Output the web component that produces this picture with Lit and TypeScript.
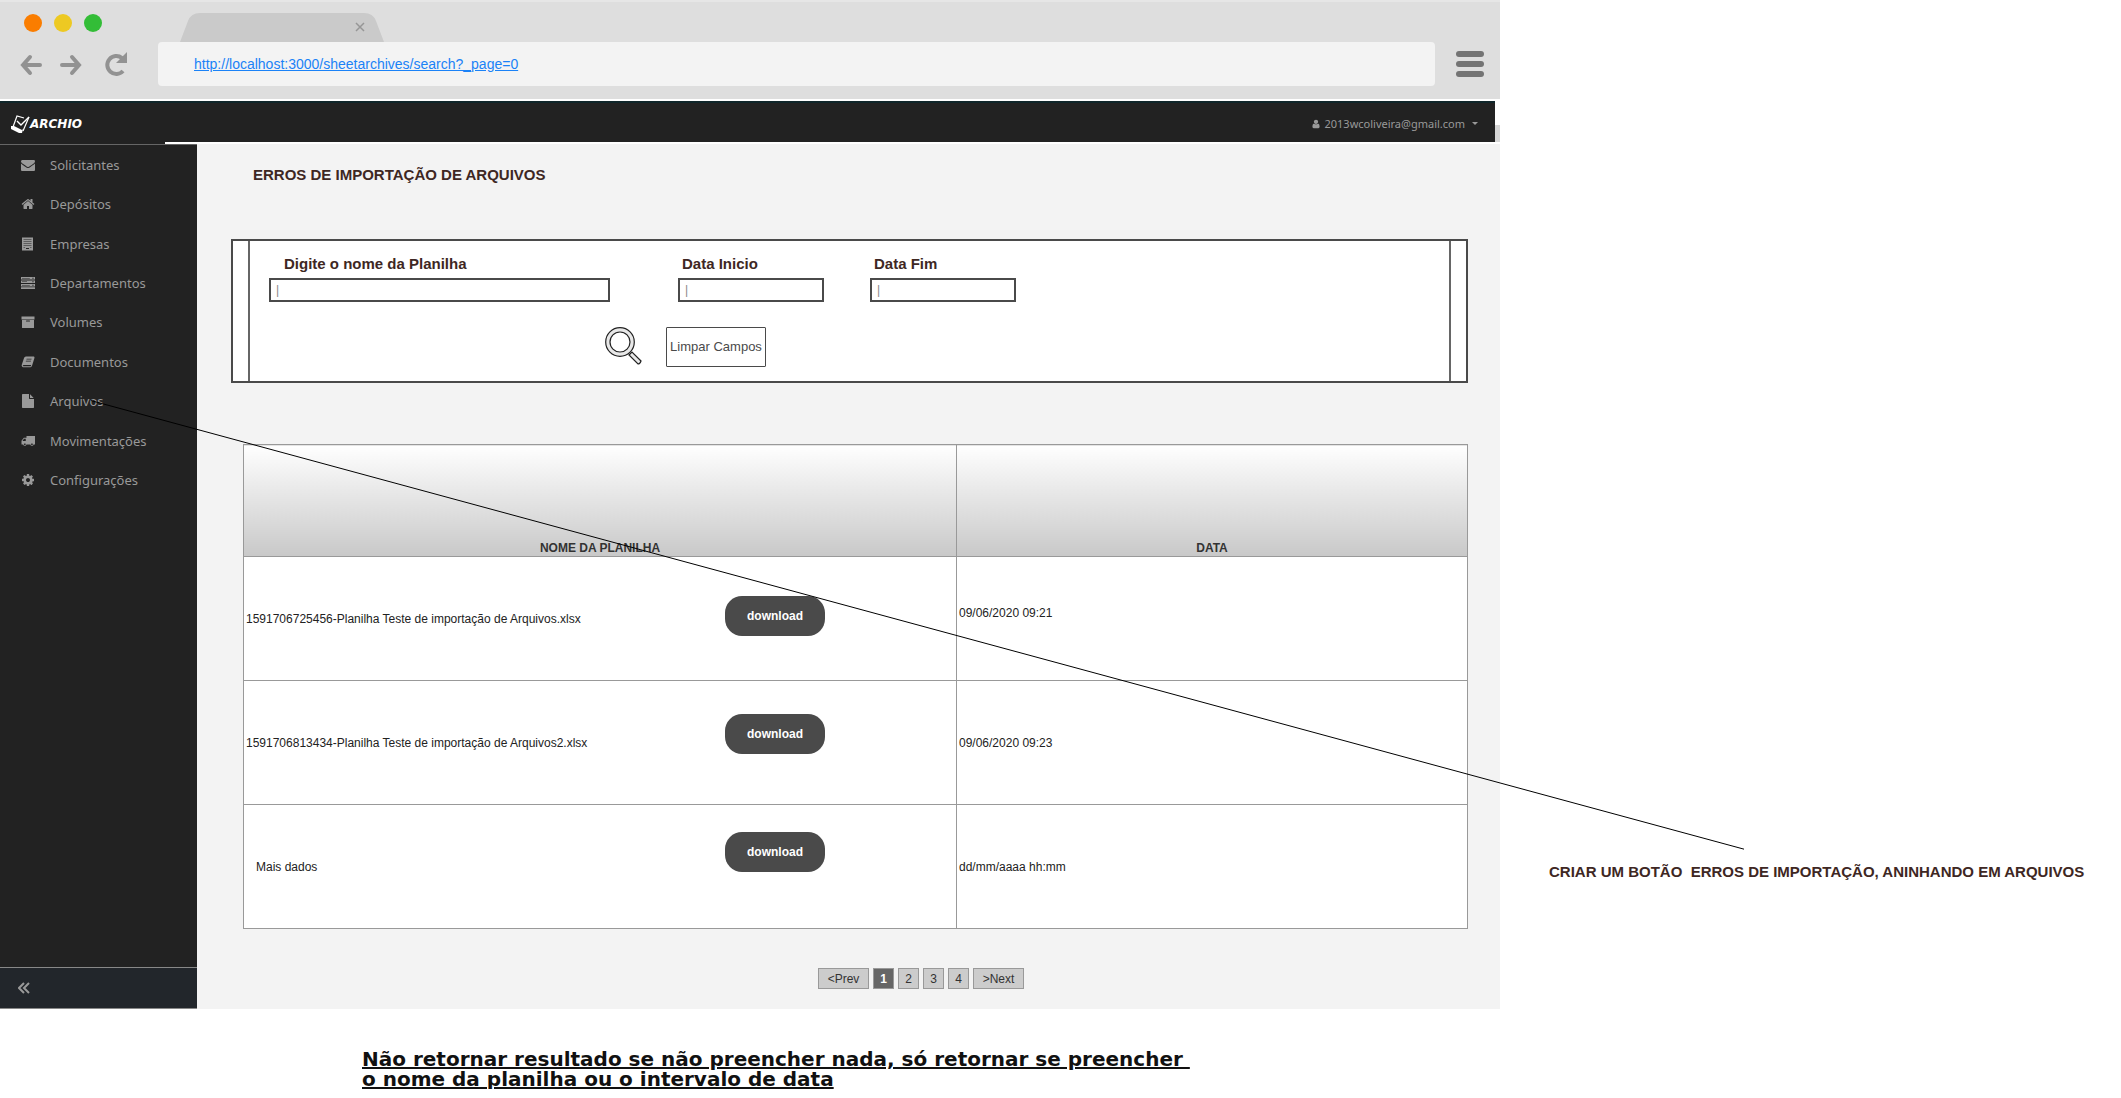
import { LitElement, html, css, svg } from "lit";
import { customElement } from "lit/decorators.js";
import { classMap } from "lit/directives/class-map.js";

const icons: Record<string, unknown> = {
  envelope: svg`<path d="M1792 710v794q0 66-47 113t-113 47h-1472q-66 0-113-47t-47-113v-794q44 49 101 87 362 246 497 345 57 42 92.5 65.5t94.5 48 110 24.5h2q51 0 110-24.5t94.5-48 92.5-65.5q170-123 498-345 57-39 100-87zm0-294q0 79-49 151t-122 123q-376 261-468 325-10 7-42.5 31t-54 38.500-52 32.500-57.500 27-50 9h-2q-23 0-50-9t-57.500-27-52-32.500-54-38.500-42.500-31q-91-64-262-182.500t-205-142.500q-62-42-117-115.500t-55-136.500q0-78 41.500-130t118.500-52h1472q65 0 112.500 47t47.500 113z"/>`,
  home: svg`<path d="M1472 992v480q0 26-19 45t-45 19h-384v-384h-256v384h-384q-26 0-45-19t-19-45v-480q0-1 .5-3t.5-3l575-474 575 474q1 2 1 6zm223-69l-62 74q-8 9-21 11h-3q-13 0-21-7l-692-577-692 577q-12 8-24 7-13-2-21-11l-62-74q-8-10-7-23.500t11-21.500l719-599q32-26 76-26t76 26l244 204v-195q0-14 9-23t23-9h192q14 0 23 9t9 23v408l219 182q10 8 11 21.500t-7 23.500z"/>`,
  building: svg`<path fill-rule="evenodd" d="M128 64h1408v1664H128zM320 290v50h1024v-50zM320 546v50h1024v-50zM320 802v50h1024v-50zM320 1058v50h1024v-50zM320 1300v60h200v-60zM1144 1300v60h200v-60zM640 1400v150h384v-150z"/>`,
  server: svg`<path fill-rule="evenodd" d="M0 128h1792v320H0zM0 576h1792v320H0zM0 1024h1792v320H0zM0 1440h1792v224H0zM128 250v76h1000v-76zM128 698v76h640v-76zM128 1146v76h1000v-76zM1450 220v130h160V220zM1450 668v130h160V668zM1450 1116v130h160v-130z"/>`,
  archive: svg`<path fill-rule="evenodd" d="M64 192h1664v384H64zM128 640h1536v960q0 64-64 64H192q-64 0-64-64zM704 704q-64 0-64 64t64 64h384q64 0 64-64t-64-64z"/>`,
  book: svg`<path fill-rule="evenodd" d="M620 200H1640Q1760 240 1720 380L1400 1420Q1350 1560 1210 1560H250Q90 1520 80 1350 90 1260 120 1180L400 360Q460 220 620 200zM720 480l-30 90h640l30-90zM640 730l-30 90h640l30-90zM240 1350q-10 90 60 90h880q70 0 100-70l24-80H330q-70 0-90 60z"/>`,
  file: svg`<path d="M1152 512V40q22 14 36 28l408 408q14 14 28 36zm-128 32q0 40 28 68t68 28h544v1056q0 40-28 68t-68 28H224q-40 0-68-28t-28-68V96q0-40 28-68t68-28h800z"/>`,
  truck: svg`<path fill-rule="evenodd" d="M704 256h1088v1088h-180a210 210 0 0 1-416 0H700a210 210 0 0 1-416 0H64V860l300-380h340zM380 620L210 850v60h400V620zM490 1200a110 110 0 1 0 1 0zM1402 1200a110 110 0 1 0 1 0z"/>`,
  cog: svg`<path d="M1152 896q0-106-75-181t-181-75-181 75-75 181 75 181 181 75 181-75 75-181zm512-109v222q0 12-8 23t-20 13l-185 28q-19 54-39 91 35 50 107 138 10 12 10 25t-9 23q-27 37-99 108t-94 71q-12 0-26-9l-138-108q-44 23-91 38-16 136-29 186-7 28-36 28h-222q-14 0-24.500-8.500t-11.500-21.500l-28-184q-49-16-90-37l-141 107q-10 9-25 9-14 0-25-11-126-114-165-168-7-10-7-23 0-12 8-23 15-21 51-66.500t54-70.500q-27-50-41-99l-183-27q-13-2-21-12.500t-8-23.500v-222q0-12 8-23t19-13l186-28q14-46 39-92-40-57-107-138-10-12-10-24 0-10 9-23 26-36 98.500-107.500t94.500-71.500q13 0 26 10l138 107q44-23 91-38 16-136 29-186 7-28 36-28h222q14 0 24.500 8.500t11.500 21.500l28 184q49 16 90 37l142-107q9-9 24-9 13 0 25 10 129 119 165 170 7 8 7 22 0 12-8 23-15 21-51 66.500t-54 70.500q26 50 41 98l183 28q13 2 21 12.500t8 23.500z"/>`,
  user: svg`<path d="M1536 1399q0 109-62.500 187t-150.500 78h-854q-88 0-150.500-78t-62.500-187q0-85 8.500-160.500t31.500-152 58.500-131 94-89 134.500-34.500q131 128 313 128t313-128q76 0 134.500 34.500t94 89 58.500 131 31.500 152 8.500 160.500zm-256-887q0 159-112.500 271.500t-271.500 112.500-271.500-112.500-112.500-271.500 112.500-271.500 271.500-112.500 271.500 112.500 112.500 271.500z"/>`,
};

const icon = (name: string) =>
  html`<svg class="icon" viewBox="0 0 1792 1792" aria-hidden="true">${icons[name]}</svg>`;

const menu = [
  ["envelope", "Solicitantes"],
  ["home", "Depósitos"],
  ["building", "Empresas"],
  ["server", "Departamentos"],
  ["archive", "Volumes"],
  ["book", "Documentos"],
  ["file", "Arquivos"],
  ["truck", "Movimentações"],
  ["cog", "Configurações"],
];

const sheets = [
  { name: "1591706725456-Planilha Teste de importação de Arquivos.xlsx", date: "09/06/2020 09:21", raised: true },
  { name: "1591706813434-Planilha Teste de importação de Arquivos2.xlsx", date: "09/06/2020 09:23" },
  { name: "Mais dados", date: "dd/mm/aaaa hh:mm", placeholder: true },
];

const pages = ["<Prev", "1", "2", "3", "4", ">Next"];

@customElement("browser-chrome")
export class BrowserChrome extends LitElement {
  static styles = css`
    :host {
      display: grid;
      grid-template-rows: 42px 44px 13px;
      background: #dedede;
      box-shadow: inset 0 2px 0 #e6e6e6;
    }
    .tabs { display: flex; padding-left: 24px; }
    .lights { display: flex; gap: 12px; width: 156px; padding-top: 14px; }
    .light { width: 18px; height: 18px; border-radius: 50%; }
    .close { background: #fa7d00; }
    .minimise { background: #edc922; }
    .maximise { background: #33bd37; }
    .tab { display: block; width: 204px; height: 29px; margin-top: 13px; }
    .bar { display: flex; align-items: center; }
    .moves { display: flex; gap: 18px; width: 158px; box-sizing: border-box; padding: 2px 0 0 20px; }
    button { display: block; margin: 0; padding: 0; border: 0; background: none; }
    button svg { display: block; }
    .address {
      flex: 1;
      align-self: stretch;
      display: flex;
      align-items: center;
      padding-left: 36px;
      border-radius: 4px;
      background: #f3f3f3;
      font: 14px/20px "Liberation Sans", Arial, sans-serif;
    }
    .address a { color: #1a82f7; }
    .menu { width: 28px; margin: 0 16px 0 21px; }
  `;

  render() {
    return html`
      <div class="tabs">
        <div class="lights">
          <span class="light close"></span><span class="light minimise"></span><span class="light maximise"></span>
        </div>
        <svg class="tab" viewBox="0 0 204 29" aria-hidden="true">
          <path fill="#cacaca" d="M0 29L8 8Q11 0 20 0H184Q193 0 196 8L204 29Z" />
          <path stroke="#969696" stroke-width="1.5" d="M176 10l8 8M184 10l-8 8" />
        </svg>
      </div>
      <div class="bar">
        <div class="moves">
          <button aria-label="Voltar">
            <svg width="22" height="26" fill="none" stroke="#929292" stroke-width="4" stroke-linecap="round"><path d="M20 13H4M10 5L3 13l7 8" /></svg>
          </button>
          <button aria-label="Avançar">
            <svg width="22" height="26" fill="none" stroke="#929292" stroke-width="4" stroke-linecap="round"><path d="M2 13h16M12 5l7 8-7 8" /></svg>
          </button>
          <button aria-label="Recarregar">
            <svg width="28" height="26" fill="none" stroke="#929292" stroke-width="4">
              <path d="M23 19A9 9 0 1 1 22 6" /><path fill="#929292" stroke="none" d="M27 0v11H16Z" />
            </svg>
          </button>
        </div>
        <div class="address"><a href="http://localhost:3000/sheetarchives/search?_page=0">http://localhost:3000/sheetarchives/search?_page=0</a></div>
        <button class="menu" aria-label="Menu">
          <svg width="28" height="26" fill="#747474">
            <rect width="28" height="6" rx="3" /><rect y="10" width="28" height="6" rx="3" /><rect y="20" width="28" height="6" rx="3" />
          </svg>
        </button>
      </div>
    `;
  }
}

@customElement("side-menu")
export class SideMenu extends LitElement {
  static styles = css`
    :host {
      display: flex;
      flex-direction: column;
      background: #222;
      border-top: 1px solid #666;
      font: 13px/20px "Noto Sans", "Open Sans", sans-serif;
    }
    nav {
      display: grid;
      grid-auto-rows: 1fr;
      min-height: 355px;
    }
    a {
      display: flex;
      align-items: center;
      gap: 15px;
      padding-left: 21px;
      color: #999;
      text-decoration: none;
    }
    .icon { width: 14px; height: 14px; fill: #999; }
    .fold {
      display: flex;
      align-items: center;
      height: 42px;
      box-sizing: border-box;
      margin: auto 0 0;
      padding: 0 0 0 18px;
      border: 0;
      border-top: 1px solid #888;
      border-bottom: 1px solid #888;
      background: #22262b;
    }
  `;

  render() {
    return html`
      <nav>${menu.map(([glyph, label]) => html`<a href="#">${icon(glyph)}<span>${label}</span></a>`)}</nav>
      <button class="fold" aria-label="Recolher">
        <svg width="12" height="12" fill="none" stroke="#999" stroke-width="2"><path d="M6 1L1 6l5 5M11 1L6 6l5 5" /></svg>
      </button>
    `;
  }
}

@customElement("sheet-errors")
export class SheetErrors extends LitElement {
  static styles = css`
    :host {
      display: block;
      padding: 21px 32px 20px 34px;
      background: #f3f3f3;
      color: #222;
      font: 12px/16px "Liberation Sans", Arial, sans-serif;
    }
    h1 { margin: 0 0 54px 22px; color: #3e2723; font-size: 15px; line-height: 20px; }
    button { font: inherit; }
    .filter {
      height: 144px;
      box-sizing: border-box;
      padding: 0 15px;
      border: 2px solid #4a4a4a;
      background: #fff;
    }
    .inner {
      height: 140px;
      box-sizing: border-box;
      padding: 13px 0 0 19px;
      border: solid #666;
      border-width: 0 2px;
    }
    .fields { display: flex; }
    .field { display: grid; gap: 4px; width: 146px; margin-right: 46px; }
    .wide { width: 341px; margin-right: 68px; }
    label { padding-left: 4px; color: #3e2723; font-size: 15px; font-weight: bold; line-height: 20px; }
    .wide label { padding-left: 15px; }
    input {
      width: 100%;
      height: 24px;
      box-sizing: border-box;
      padding: 0 5px;
      border: 2px solid #4a4a4a;
      border-radius: 0;
      background: #fff;
      color: #888;
      font: inherit;
    }
    .actions { display: flex; gap: 24px; padding: 25px 0 0 336px; }
    .search { width: 37px; height: 40px; padding: 0; border: 0; background: none; }
    .search svg { display: block; }
    .clear {
      width: 100px;
      height: 40px;
      padding: 0;
      border: 1px solid #4a4a4a;
      border-radius: 1px;
      background: #fff;
      color: #4a4a4a;
      font-size: 13px;
      white-space: nowrap;
    }
    .results { display: grid; margin: 61px 0 39px 12px; }
    .results > * { grid-area: 1 / 1; }
    table { width: 100%; border-collapse: collapse; table-layout: fixed; background: #fff; }
    th, td { box-sizing: border-box; border: 1px solid #999; padding: 0 2px; }
    th {
      height: 112px;
      vertical-align: bottom;
      background: linear-gradient(#fff, #c8c8c8);
      color: #333;
    }
    td { height: 124px; text-align: left; }
    .date { width: 511px; }
    .raised { padding-bottom: 12px; }
    .placeholder { padding-left: 12px; }
    .downloads {
      display: flex;
      flex-direction: column;
      gap: 78px;
      justify-self: start;
      margin: 152px 0 0 482px;
    }
    .download {
      width: 100px;
      height: 40px;
      padding: 0;
      border: 0;
      border-radius: 17px;
      background: #4a4a4a;
      color: #fff;
      font-weight: bold;
    }
    .pages { display: flex; justify-content: center; gap: 4px; padding-left: 143px; }
    .page {
      width: 21px;
      height: 21px;
      padding: 0;
      border: 1px solid #999;
      background: #ccc;
      color: #333;
    }
    .step { width: 51px; }
    .current { background: #666; color: #fff; font-weight: bold; }
  `;

  private field(id: string, label: string, wide = false) {
    return html`
      <div class=${classMap({ field: true, wide })}>
        <label for=${id}>${label}</label>
        <input id=${id} type="text" .value=${"|"} />
      </div>
    `;
  }

  render() {
    return html`
      <h1>ERROS DE IMPORTAÇÃO DE ARQUIVOS</h1>
      <form class="filter">
        <div class="inner">
          <div class="fields">
            ${this.field("name", "Digite o nome da Planilha", true)}
            ${this.field("start", "Data Inicio")}
            ${this.field("end", "Data Fim")}
          </div>
          <div class="actions">
            <button class="search" type="button" aria-label="Pesquisar">
              <svg width="37" height="40" stroke="#222" stroke-width="1.2" fill="#e8e8e8">
                <path d="M24 28l3-3L36 34q-1 3-3 3Z" />
                <circle cx="15" cy="15" r="14.300" />
                <circle cx="15" cy="15" r="10" fill="#fff" />
              </svg>
            </button>
            <button class="clear" type="button">Limpar Campos</button>
          </div>
        </div>
      </form>
      <div class="results">
        <table>
          <thead>
            <tr><th>NOME DA PLANILHA</th><th class="date">DATA</th></tr>
          </thead>
          <tbody>
            ${sheets.map(
              (s) => html`
                <tr>
                  <td class=${classMap({ placeholder: !!s.placeholder })}>${s.name}</td>
                  <td class=${classMap({ raised: !!s.raised })}>${s.date}</td>
                </tr>
              `
            )}
          </tbody>
        </table>
        <div class="downloads">${sheets.map(() => html`<button class="download">download</button>`)}</div>
      </div>
      <nav class="pages">
        ${pages.map(
          (p) => html`<button class=${classMap({ page: true, step: p.length > 1, current: p === "1" })}>${p}</button>`
        )}
      </nav>
    `;
  }
}

@customElement("app-root")
export class AppRoot extends LitElement {
  static styles = css`
    :host { display: block; background: #fff; font-family: "Liberation Sans", Arial, sans-serif; }
    .board {
      position: relative;
      display: grid;
      grid-template-columns: minmax(0, 1500fr) minmax(0, 621fr);
    }
    .topline { display: flex; padding-top: 2px; }
    .topbar {
      flex: 1;
      display: flex;
      align-items: center;
      justify-content: space-between;
      height: 41px;
      box-sizing: border-box;
      padding: 2px 17px 0 11px;
      border-top: 2px solid #10262a;
      background: #222;
    }
    .thumb { align-self: flex-end; width: 5px; height: 17px; background: #d6d6d6; }
    .brand { display: flex; align-items: center; color: #fff; text-decoration: none; }
    .word { font: italic bold 12px/16px "DejaVu Sans", sans-serif; }
    .user {
      display: flex;
      align-items: center;
      gap: 3px;
      padding: 0;
      border: 0;
      background: none;
      color: #999;
      font: 11px/16px "Noto Sans", "Open Sans", sans-serif;
    }
    .user .icon { width: 10px; height: 10px; fill: #999; }
    .caret { margin-left: 4px; border: 3px solid transparent; border-top-color: #999; border-bottom: 0; }
    .rule { height: 2px; background: linear-gradient(90deg, #222 165px, #fff 165px); }
    .body { display: grid; grid-template-columns: 197px minmax(0, 1fr); }
    .remark {
      margin: 862px 0 0 49px;
      color: #3e2723;
      font-size: 15px;
      font-weight: bold;
      line-height: 20px;
      white-space: pre;
    }
    .pointer { position: absolute; inset: 0; width: 100%; height: 100%; pointer-events: none; }
    .note {
      margin: 40px 0 0 362px;
      color: #111;
      font: bold 20px/20px "DejaVu Sans", sans-serif;
      text-decoration: underline;
      white-space: nowrap;
    }
  `;

  render() {
    return html`
      <div class="board">
        <section>
          <browser-chrome></browser-chrome>
          <div class="topline">
            <header class="topbar">
              <a class="brand" href="#">
                <svg width="19" height="18" fill="none" stroke="#fff" aria-hidden="true">
                  <path stroke-width="1.200" d="M13 3L6 1 2 12M18 2L12 16" />
                  <path stroke-width="1.400" d="M6 6l4 4 8-8" />
                  <path fill="#fff" stroke="none" d="M0 11l3 0 8 4 1-1-1 4-3 0-8-4Z" />
                </svg>
                <span class="word">ARCHIO</span>
              </a>
              <button class="user">${icon("user")}<span>2013wcoliveira@gmail.com</span><span class="caret"></span></button>
            </header>
            <span class="thumb"></span>
          </div>
          <div class="rule"></div>
          <div class="body">
            <side-menu></side-menu>
            <sheet-errors></sheet-errors>
          </div>
        </section>
        <p class="remark">CRIAR UM BOTÃO  ERROS DE IMPORTAÇÃO, ANINHANDO EM ARQUIVOS</p>
        <svg class="pointer" viewBox="0 0 2121 1010" preserveAspectRatio="none" aria-hidden="true">
          <line x1="91" y1="401" x2="1744" y2="850" stroke="#000" />
        </svg>
      </div>
      <p class="note">Não retornar resultado se não preencher nada, só retornar se preencher&nbsp;<br />o nome da planilha ou o intervalo de data</p>
    `;
  }
}
